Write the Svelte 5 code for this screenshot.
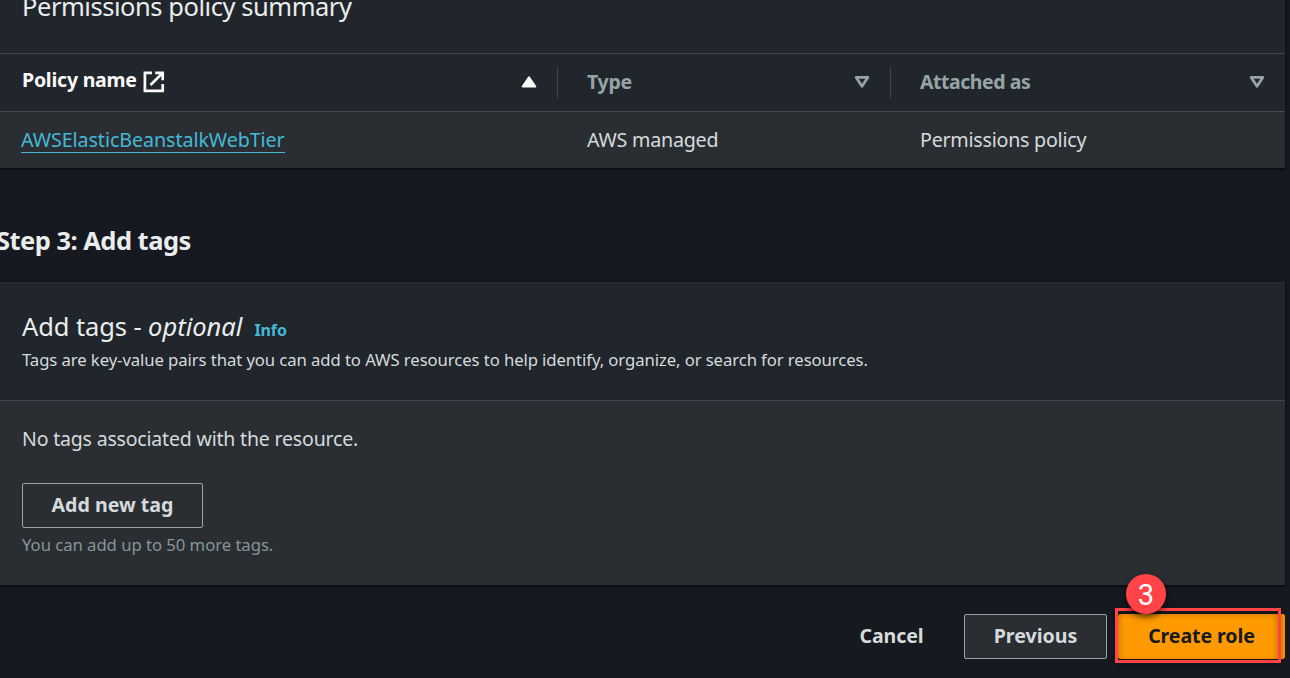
<script>
  const columns = [
    { key: 'name', label: 'Policy name', sorted: true },
    { key: 'type', label: 'Type', sorted: false },
    { key: 'attached', label: 'Attached as', sorted: false }
  ];
  const policies = [
    { name: 'AWSElasticBeanstalkWebTier', type: 'AWS managed', attached: 'Permissions policy' }
  ];
</script>

<main class="page">
  <section class="panel">
    <header class="summary-head">
      <h2 class="title summary">Permissions policy summary</h2>
    </header>
    <div class="grid thead">
      {#each columns as col}
        <div class="th {col.key}">
          <span class="label">
            {col.label}
            {#if col.sorted}
              <svg class="ext" width="22" height="22" viewBox="0 0 22 22" fill="none" stroke="currentColor" stroke-width="2.7">
                <path d="M9 1.9H1.9V19.8H19.7V13M12.2 1.9H19.7V9.2M19.2 2.4L7.5 14" />
              </svg>
            {/if}
          </span>
          {#if col.sorted}
            <svg class="caret" width="16" height="14" viewBox="0 0 16 14"><path d="M8 2.2L14.3 11.6H1.7Z" fill="currentColor" stroke="currentColor" stroke-width="2" stroke-linejoin="round" /></svg>
          {:else}
            <svg class="caret" width="16" height="14" viewBox="0 0 16 14"><path d="M2.2 2.4H13.8L8 11.3Z" fill="none" stroke="currentColor" stroke-width="2.8" stroke-linejoin="round" /></svg>
          {/if}
        </div>
      {/each}
    </div>
    {#each policies as p}
      <div class="grid row">
        <div class="td"><a class="link" href="#policy">{p.name}</a></div>
        <div class="td managed">{p.type}</div>
        <div class="td policy">{p.attached}</div>
      </div>
    {/each}
  </section>

  <h2 class="step">Step 3: Add tags</h2>

  <section class="panel tags">
    <header class="tags-head">
      <div class="title-line">
        <h2 class="title">Add tags - <em>optional</em></h2>
        <a class="info" href="#info">Info</a>
      </div>
      <p class="desc">Tags are key-value pairs that you can add to AWS resources to help identify, organize, or search for resources.</p>
    </header>
    <div class="tags-body">
      <p class="empty">No tags associated with the resource.</p>
      <button class="btn add">Add new tag</button>
      <p class="hint">You can add up to 50 more tags.</p>
    </div>
  </section>

  <footer class="actions">
    <button class="btn cancel">Cancel</button>
    <button class="btn previous">Previous</button>
    <div class="primary-wrap">
      <button class="btn primary">Create role</button>
      <div class="highlight"></div>
      <div class="badge">3</div>
    </div>
  </footer>
</main>

<style>
  :global(body) {
    background: #16191f;
    overflow: hidden;
  }
  .page {
    box-sizing: border-box;
    width: 1290px;
    height: 678px;
    padding-right: 5px;
    overflow: hidden;
    background: #16191f;
    color: #d5dbdb;
    font-family: 'Noto Sans', sans-serif;
    font-size: 19.7px;
    line-height: 28px;
  }
  h2, p { margin: 0; }
  a { text-decoration: none; color: #44b9d6; }
  .panel {
    background: #2a2e33;
    box-shadow: 0 1px 2px 1px rgba(0, 0, 0, 0.5);
  }
  .summary-head {
    display: flex;
    align-items: flex-start;
    box-sizing: border-box;
    height: 54px;
    padding-left: 22px;
    background: #21252c;
    border-bottom: 1px solid #414750;
  }
  .title {
    font-size: 25.5px;
    line-height: 30px;
    font-weight: 400;
    letter-spacing: -0.1px;
    color: #eaeded;
    white-space: nowrap;
  }
  .summary { margin-top: -9px; letter-spacing: -0.46px; }
  .grid {
    display: grid;
    grid-template-columns: 558px 333px 394px;
  }
  .thead {
    height: 57px;
    background: #21252c;
    border-bottom: 1px solid #414750;
    align-items: center;
  }
  .th {
    display: flex;
    align-items: center;
    justify-content: space-between;
    box-sizing: border-box;
    height: 31px;
    padding: 0 20px 1px 29px;
    border-right: 1px solid #414750;
    font-size: 19.5px;
    font-weight: 700;
    letter-spacing: -0.25px;
    color: #95a5a6;
  }
  .th.name { padding-left: 22px; color: #fafafa; letter-spacing: -0.22px; }
  .th.name .label { padding-bottom: 4px; }
  .th.attached { border-right: 0; letter-spacing: -0.46px; }
  .label { display: flex; align-items: center; gap: 6px; }
  .ext { position: relative; top: 2px; }
  .row { height: 56px; align-items: center; }
  .td { padding: 0 0 1px 29px; }
  .td:first-child { padding: 0 0 1px 21px; }
  .link {
    display: block;
    width: max-content;
    height: 25px;
    line-height: 26px;
    border-bottom: 1px solid #44b9d6;
    letter-spacing: -0.08px;
  }
  .managed { letter-spacing: -0.25px; }
  .policy { letter-spacing: -0.26px; }
  .step {
    margin: 57px 0 27px -4px;
    font-size: 25.5px;
    line-height: 30px;
    letter-spacing: -0.53px;
    color: #eaeded;
  }
  .tags { border-top: 1px solid #2a2e33; }
  .tags-head {
    box-sizing: border-box;
    height: 118px;
    padding: 28px 22px 0;
    background: #21252c;
    border-bottom: 1px solid #414750;
  }
  .title-line { display: flex; align-items: baseline; gap: 12px; }
  .title em { letter-spacing: 0; }
  .info { font-size: 16px; font-weight: 700; line-height: 24px; letter-spacing: -0.1px; }
  .desc {
    margin-top: 6px;
    font-size: 16.7px;
    line-height: 24px;
    letter-spacing: -0.082px;
    white-space: nowrap;
  }
  .tags-body {
    box-sizing: border-box;
    height: 184px;
    padding: 24px 22px 0;
  }
  .empty { font-size: 19.5px; letter-spacing: -0.18px; margin-bottom: 30px; }
  .btn {
    display: block;
    box-sizing: border-box;
    height: 45px;
    margin: 0;
    padding: 0 0 2px;
    border: 1px solid #95a5a6;
    border-radius: 2px;
    background: #2a2e33;
    color: #d5dbdb;
    font: 700 19.6px/28px 'Noto Sans', sans-serif;
  }
  .add { width: 181px; }
  .hint {
    margin-top: 5px;
    font-size: 16.7px;
    line-height: 24px;
    letter-spacing: -0.04px;
    color: #879596;
  }
  .actions {
    display: flex;
    justify-content: flex-end;
    margin-top: 29px;
  }
  .cancel {
    width: 125px;
    margin-right: 10px;
    border-color: transparent;
    background: none;
    letter-spacing: -0.15px;
  }
  .previous { width: 143px; margin-right: 11px; }
  .primary-wrap { position: relative; }
  .primary {
    width: 167px;
    border-color: #ff9900;
    background: #ff9900;
    color: #16191f;
    letter-spacing: -0.1px;
  }
  .highlight {
    position: absolute;
    box-sizing: border-box;
    left: -3px;
    top: -6px;
    width: 166px;
    height: 55px;
    border: 3px solid #ff4347;
    filter: drop-shadow(0 2px 3px rgba(0, 0, 0, 0.45));
  }
  .badge {
    position: absolute;
    left: 8px;
    top: -40px;
    width: 40px;
    height: 40px;
    border-radius: 50%;
    background: #ff4347;
    box-shadow: 0 3px 6px rgba(0, 0, 0, 0.6);
    color: #fff;
    font: 29px/42px Roboto, sans-serif;
    text-align: center;
  }
</style>
